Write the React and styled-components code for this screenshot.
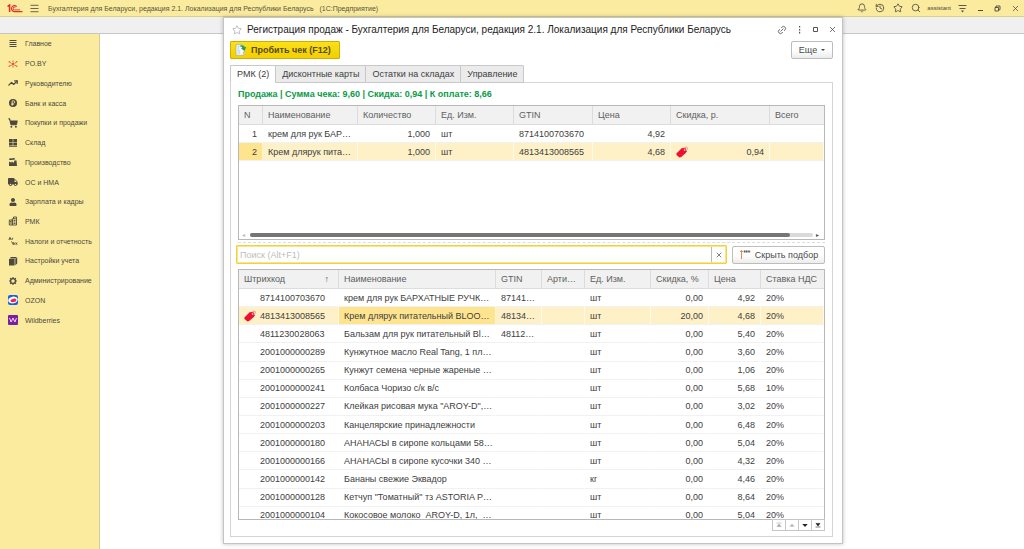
import React from 'react';
import styled, { createGlobalStyle } from 'styled-components';
import {
  Bell, History, Star, Search, Link2, Menu, TrendingUp, ShoppingCart, X,
} from 'lucide-react';
import { FaTruck, FaUser } from 'react-icons/fa';

const GlobalStyle = createGlobalStyle`
  * {
    box-sizing: border-box;
  }
  body {
    margin: 0;
    background: #fff;
    color: #404040;
    font-family: 'Liberation Sans', Arial, sans-serif;
    font-size: 9px;
  }
  button, input {
    font-family: inherit;
    font-size: inherit;
    color: inherit;
  }
`;

const SECTIONS = [
  { id: 'main', title: 'Главное' },
  { id: 'po', title: 'PO.BY' },
  { id: 'chief', title: 'Руководителю' },
  { id: 'bank', title: 'Банк и касса' },
  { id: 'sales', title: 'Покупки и продажи' },
  { id: 'stock', title: 'Склад' },
  { id: 'factory', title: 'Производство' },
  { id: 'assets', title: 'ОС и НМА' },
  { id: 'staff', title: 'Зарплата и кадры' },
  { id: 'rmk', title: 'РМК' },
  { id: 'taxes', title: 'Налоги и отчетность' },
  { id: 'settings', title: 'Настройки учета' },
  { id: 'admin', title: 'Администрирование' },
  { id: 'ozon', title: 'OZON' },
  { id: 'wb', title: 'Wildberries' },
];

const TABS = ['РМК (2)', 'Дисконтные карты', 'Остатки на складах', 'Управление'];

const CART = [
  { n: 1, name: 'крем для рук БАР…', qty: '1,000', unit: 'шт', gtin: '8714100703670', price: '4,92', discount: '' },
  { n: 2, name: 'Крем длярук пита…', qty: '1,000', unit: 'шт', gtin: '4813413008565', price: '4,68', discount: '0,94' },
];

const GOODS = [
  ['8714100703670', 'крем для рук БАРХАТНЫЕ РУЧК…', '87141…', 'шт', '0,00', '4,92', '20%'],
  ['4813413008565', 'Крем длярук питательный BLOO…', '48134…', 'шт', '20,00', '4,68', '20%'],
  ['4811230028063', 'Бальзам для рук питательный Bl…', '48112…', 'шт', '0,00', '5,40', '20%'],
  ['2001000000289', 'Кунжутное масло Real Tang, 1 пл…', '', 'шт', '0,00', '3,60', '20%'],
  ['2001000000265', 'Кунжут семена черные жареные …', '', 'шт', '0,00', '1,06', '20%'],
  ['2001000000241', 'Колбаса Чоризо с/к в/с', '', 'шт', '0,00', '5,68', '10%'],
  ['2001000000227', 'Клейкая рисовая мука "AROY-D",…', '', 'шт', '0,00', '3,02', '20%'],
  ['2001000000203', 'Канцелярские принадлежности', '', 'шт', '0,00', '6,48', '20%'],
  ['2001000000180', 'АНАНАСЫ в сиропе кольцами 58…', '', 'шт', '0,00', '5,04', '20%'],
  ['2001000000166', 'АНАНАСЫ в сиропе кусочки 340 …', '', 'шт', '0,00', '4,32', '20%'],
  ['2001000000142', 'Бананы свежие Эквадор', '', 'кг', '0,00', '4,46', '20%'],
  ['2001000000128', 'Кетчуп "Томатный" тз ASTORIA P…', '', 'шт', '0,00', '8,64', '20%'],
  ['2001000000104', 'Кокосовое молоко\u00a0 AROY-D, 1л,\u00a0 …', '', 'шт', '0,00', '5,04', '20%'],
];

function SectionIcon({ id }) {
  switch (id) {
    case 'main':
      return <svg width="10" height="10" viewBox="0 0 10 10"><path d="M1.5 1.5h7M1.5 3.5h7M1.5 5.5h7M1.5 7.5h7" stroke="#4d4840" /></svg>;
    case 'po':
      return (
        <svg width="10" height="10" viewBox="0 0 10 10">
          <path d="M5 3.5V1.5M5 6.5v2M3.5 4.5L1.5 3M6.5 4.5L8.5 3M3.8 6L1.5 7M6.2 6l2.3 1" stroke="#e2582f" strokeWidth="0.9" />
          <g fill="#e2582f"><circle cx="1.3" cy="2.8" r=".8" /><circle cx="8.7" cy="2.8" r=".8" /><circle cx="5" cy="5" r="1.2" /><circle cx="1.2" cy="7.3" r=".7" /><circle cx="8.8" cy="7.3" r=".7" /></g>
        </svg>
      );
    case 'chief':
      return <TrendingUp size={10} strokeWidth={3} />;
    case 'bank':
      return (
        <svg width="10" height="10" viewBox="0 0 10 10">
          <circle cx="5" cy="5" r="4" fill="#4d4840" />
          <path d="M4.2 7.8V2.8h1.3a1.2 1.2 0 0 1 0 2.5H3.3M3.3 6.5h2.4" fill="none" stroke="#fbeb9e" strokeWidth=".8" />
        </svg>
      );
    case 'sales':
      return <ShoppingCart size={10} strokeWidth={2.5} fill="currentColor" />;
    case 'stock':
      return (
        <svg width="10" height="10" viewBox="0 0 10 10" fill="#4d4840">
          <path d="M1 1h3.7v3H1zM5.3 1H9v3H5.3zM1 4.6h3.7v3H1zM5.3 4.6H9v3H5.3zM1 8.2h8V9H1z" />
        </svg>
      );
    case 'factory':
      return (
        <svg width="10" height="10" viewBox="0 0 10 10" fill="#4d4840">
          <path d="M1 9V4.6l2.4 1.2V4.4l2.5 1.4L6.3 3.4h2.2L9 9zM1 2.8C1.3 1.3 2.8 1 3.6 1.7 4.6.7 6.6.8 7.4 2.2 5.5 3 2.7 3.3 1 2.8z" />
        </svg>
      );
    case 'assets':
      return <FaTruck size={10} />;
    case 'staff':
      return <FaUser size={8} />;
    case 'rmk':
      return (
        <svg width="10" height="10" viewBox="0 0 10 10" fill="none" stroke="#4d4840" strokeWidth=".9">
          <path d="M1.3 4h3v5h-3zM4.3 2.8h4.2V9H4.3zM5.5 2.8V1h3v1.8M5.5 4.5h2M5.5 6h2M5.5 7.5h2M2 5.5h1.5M2 7h1.5" />
        </svg>
      );
    case 'taxes':
      return (
        <svg width="10" height="10" viewBox="0 0 10 10" fill="none" stroke="#4d4840" strokeWidth=".8">
          <path d="M.8 4L2 1.2 3.2 4M1.3 3h1.4M4.2 4V2.2M4.2 2.5l1-.4M3 5.5L6 8" />
          <circle cx="5.6" cy="7.6" r="1" /><path d="M7.6 6.5l1.6 2.3M9.2 6.5L7.6 8.8" />
        </svg>
      );
    case 'settings':
      return (
        <svg width="10" height="10" viewBox="0 0 10 10" fill="#4d4840">
          <path d="M1 3h5.6v6.5H1zM1.6 2.4L3 1h6L7.3 2.4zM7.3 3L9.2 1.4v6L7.3 9.2z" />
        </svg>
      );
    case 'admin':
      return (
        <svg width="10" height="10" viewBox="0 0 10 10" fill="none" stroke="#4d4840">
          <circle cx="5" cy="5" r="2.4" strokeWidth="1.3" />
          <path d="M5 1v1.4M5 7.6V9M1 5h1.4M7.6 5H9M2.1 2.1l1 1M6.9 6.9l1 1M7.9 2.1l-1 1M3.1 6.9l-1 1" strokeWidth="1.2" />
        </svg>
      );
    case 'ozon':
      return (
        <svg width="10" height="10" viewBox="0 0 10 10">
          <rect width="10" height="10" rx="2" fill="#1261ee" />
          <ellipse cx="5" cy="5" rx="4.8" ry="3.4" fill="#fff" transform="rotate(-12 5 5)" />
          <ellipse cx="5.4" cy="5.4" rx="3" ry="1.7" fill="#f4274f" transform="rotate(-12 5 5)" />
        </svg>
      );
    default:
      return (
        <svg width="10" height="10" viewBox="0 0 10 10">
          <rect width="10" height="10" rx="1" fill="#7c1fa0" />
          <path d="M1.5 3l1.6 4L5 3l1.9 4 1.6-4" fill="none" stroke="#f3d6f5" strokeWidth="1" />
        </svg>
      );
  }
}

const Logo = () => (
  <svg width="16" height="9" viewBox="0 0 16 9" fill="none" stroke="#e0302a">
    <path d="M.6 2.6L2.6 1v7" strokeWidth="1.5" />
    <path d="M9.7 2.6A3 3 0 1 0 7.3 7.6H15.5" strokeWidth="1.1" />
    <path d="M8.4 3.5A1.4 1.4 0 1 0 7.3 5.9H13" strokeWidth=".9" />
  </svg>
);

const DiscountTag = () => (
  <svg width="12" height="12" viewBox="0 0 12 12">
    <path d="M.4 7.4L5.6 2.3l3.6-.6 1.5 3.5-.9 1.7-4.6 4.2-1.7.3L.5 8.9z" fill="#ee1030" />
    <path d="M7.6 3.7l1.4-.6.4 1.3-1.2.4z" fill="#fff" />
    <path d="M8.5 3.6c0-2.4 2.2-3.2 2.7-1.9.4 1.4-.7 2.6-1.8 3" fill="none" stroke="#f0707c" strokeWidth=".8" />
  </svg>
);

const ReceiptIcon = () => (
  <svg width="12" height="12" viewBox="0 0 12 12">
    <path d="M1 .8h6.2L9 2.8v8.4H1z" fill="#fff" stroke="#9aa7a4" strokeWidth=".7" />
    <path d="M2.3 3h2M2.3 5h2M2.3 7h3M2.3 9h3" stroke="#7eb6dc" strokeWidth=".8" />
    <path d="M4.2 2.6C6 .5 8.8.8 9.7 3.2l1.6-.2-1.8 3.8-3.6-2.2 1.5-.6C6.7 2.6 5.4 2.3 4.2 2.6z" fill="#1c9d62" />
    <path d="M8.6 7.6l2.8 2.2-1.3 1.6-2.8-2.1z" fill="#efc46b" />
  </svg>
);

const PickIcon = () => (
  <svg width="12" height="11" viewBox="0 0 12 11">
    <path d="M2.5 10V1.5M1 3l1.5-1.7L4 3" fill="none" stroke="#e08a5c" strokeWidth="1" />
    <path d="M4.8 2.4h6.4" stroke="#555" strokeWidth="2" strokeDasharray="1.4 .4" />
  </svg>
);

export default function App() {
  return (
    <Page>
      <GlobalStyle />
      <TopBar>
        <Logo />
        <IconButton aria-label="Меню"><Menu size={11} strokeWidth={1.8} /></IconButton>
        <AppTitle>Бухгалтерия для Беларуси, редакция 2.1. Локализация для Республики Беларусь &nbsp; (1С:Предприятие)</AppTitle>
        <TopTools>
          <IconButton aria-label="Уведомления"><Bell size={10} /></IconButton>
          <IconButton aria-label="История"><History size={10} /></IconButton>
          <IconButton aria-label="Избранное"><Star size={10} /></IconButton>
          <IconButton aria-label="Поиск"><Search size={10} /></IconButton>
        </TopTools>
        <UserName href="#">assistant</UserName>
        <WindowTools>
          <IconButton aria-label="Настройка">
            <svg width="9" height="9" viewBox="0 0 9 9"><path d="M.5 1.5h8M1.5 4.5h6" stroke="#4d4840" strokeWidth=".9" /><path d="M3 6.5h3L4.5 8.5z" fill="#4d4840" /></svg>
          </IconButton>
          <IconButton aria-label="Свернуть">
            <svg width="7" height="9" viewBox="0 0 7 9"><path d="M1 6.5h5" stroke="#4d4840" /></svg>
          </IconButton>
          <IconButton aria-label="Восстановить">
            <svg width="7" height="9" viewBox="0 0 7 9" fill="none" stroke="#4d4840" strokeWidth=".9"><path d="M1 3.5h3.5V7H1zM2 3.5V2h4v3.8H4.5" /></svg>
          </IconButton>
          <IconButton aria-label="Закрыть"><X size={9} /></IconButton>
        </WindowTools>
      </TopBar>
      <OpenBar />
      <Workspace>
        <Sidebar>
          <SectionList>
            {SECTIONS.map(({ id, title }) => (
              <SectionLink key={id} href="#">
                <SectionMark><SectionIcon id={id} /></SectionMark>
                {title}
              </SectionLink>
            ))}
          </SectionList>
        </Sidebar>
      </Workspace>

      <Dialog>
        <DialogHeader>
          <Star size={10} color="#999" strokeWidth={1.5} />
          <DialogTitle>Регистрация продаж - Бухгалтерия для Беларуси, редакция 2.1. Локализация для Республики Беларусь</DialogTitle>
          <DialogTools>
            <IconButton aria-label="Ссылка"><LinkIcon size={10} strokeWidth={1.8} /></IconButton>
            <IconButton aria-label="Еще действия">
              <svg width="7" height="9" viewBox="0 0 7 9" fill="#555"><path d="M3 1h1.2v1.6H3zM3 3.9h1.2v1.6H3zM3 6.8h1.2v1.6H3z" /></svg>
            </IconButton>
            <IconButton aria-label="Развернуть">
              <svg width="7" height="9" viewBox="0 0 7 9"><path d="M1.5 2.5h4v4h-4z" fill="none" stroke="#555" /></svg>
            </IconButton>
            <IconButton aria-label="Закрыть окно"><X size={9} /></IconButton>
          </DialogTools>
        </DialogHeader>

        <Toolbar>
          <CheckButton><ReceiptIcon />Пробить чек (F12)</CheckButton>
          <PlainButton $small>Еще<Caret /></PlainButton>
        </Toolbar>

        <Tabs role="tablist">
          {TABS.map((tab, i) => (
            <Tab key={tab} role="tab" aria-selected={i === 0} $active={i === 0}>{tab}</Tab>
          ))}
        </Tabs>

        <TabPanel role="tabpanel">
          <Summary>Продажа | Сумма чека: 9,60 | Скидка: 0,94 | К оплате: 8,66</Summary>

          <CartFrame>
            <Grid>
              <colgroup>
                <Col $w={24} /><Col $w={95} /><Col $w={78} /><Col $w={78} /><Col $w={79} /><Col $w={78} /><Col $w={99} /><Col />
              </colgroup>
              <thead>
                <tr>
                  <Th>N</Th><Th>Наименование</Th><Th>Количество</Th><Th>Ед. Изм.</Th>
                  <Th>GTIN</Th><Th>Цена</Th><Th>Скидка, р.</Th><Th>Всего</Th>
                </tr>
              </thead>
              <tbody>
                {CART.map((row) => (
                  <Row key={row.n} $selected={row.n === 2}>
                    <Td $right $current={row.n === 2}>{row.n}</Td>
                    <Td>{row.name}</Td>
                    <Td $right>{row.qty}</Td>
                    <Td>{row.unit}</Td>
                    <Td>{row.gtin}</Td>
                    <Td $right>{row.price}</Td>
                    <Td $right>{row.discount && <DiscountCell><DiscountTag />{row.discount}</DiscountCell>}</Td>
                    <Td />
                  </Row>
                ))}
              </tbody>
            </Grid>
            <ScrollBar>
              <Arrow $dim>◂</Arrow>
              <Track><Thumb /></Track>
              <Arrow>▸</Arrow>
            </ScrollBar>
          </CartFrame>

          <Splitter />

          <SearchRow>
            <SearchBox>
              <input type="text" placeholder="Поиск (Alt+F1)" aria-label="Поиск" />
              <button aria-label="Очистить"><X size={8} /></button>
            </SearchBox>
            <PlainButton><PickIcon />Скрыть подбор</PlainButton>
          </SearchRow>

          <GoodsFrame>
            <Grid $tall>
              <colgroup>
                <Col $w={100} /><Col $w={157} /><Col $w={46} /><Col $w={43} /><Col $w={66} /><Col $w={58} /><Col $w={52} /><Col />
              </colgroup>
              <thead>
                <tr>
                  <Th><SortHead>Штрихкод<span>↑</span></SortHead></Th>
                  <Th>Наименование</Th><Th>GTIN</Th><Th>Арти…</Th><Th>Ед. Изм.</Th>
                  <Th>Скидка, %</Th><Th>Цена</Th><Th>Ставка НДС</Th>
                </tr>
              </thead>
              <tbody>
                {GOODS.map(([code, name, gtin, unit, discount, price, vat], i) => (
                  <Row key={code} $selected={i === 1}>
                    <Td><CodeCell><Mark>{i === 1 && <DiscountTag />}</Mark>{code}</CodeCell></Td>
                    <Td $current={i === 1}>{name}</Td>
                    <Td>{gtin}</Td>
                    <Td />
                    <Td>{unit}</Td>
                    <Td $right>{discount}</Td>
                    <Td $right>{price}</Td>
                    <Td>{vat}</Td>
                  </Row>
                ))}
              </tbody>
            </Grid>
          </GoodsFrame>

          <Pager>
            <PagerButton aria-label="В начало" disabled><svg width="6" height="6" viewBox="0 0 6 6"><path d="M.5 1h5M3 2l2 2.6H1z" fill="currentColor" stroke="currentColor" strokeWidth=".6" /></svg></PagerButton>
            <PagerButton aria-label="Вверх" disabled><svg width="6" height="6" viewBox="0 0 6 6"><path d="M3 2l2.5 2.6h-5z" fill="currentColor" /></svg></PagerButton>
            <PagerButton aria-label="Вниз"><svg width="6" height="6" viewBox="0 0 6 6"><path d="M3 5L.3 2h5.4z" fill="currentColor" /></svg></PagerButton>
            <PagerButton aria-label="В конец"><svg width="6" height="6" viewBox="0 0 6 6"><path d="M.5 5h5M3 4L1 1.4h4z" fill="currentColor" stroke="currentColor" strokeWidth=".6" /></svg></PagerButton>
          </Pager>
        </TabPanel>
      </Dialog>
    </Page>
  );
}

const Page = styled.div`
  position: relative;
  display: flex;
  flex-direction: column;
  min-height: 100vh;
`;

const TopBar = styled.header`
  display: flex;
  align-items: center;
  height: 17px;
  padding: 0 4px 0 7px;
  gap: 6px;
  background: #fbeb9e;
  border-bottom: 1px solid #d9cf95;
  color: #4d4840;
`;

const AppTitle = styled.div`
  flex: 1;
  margin-left: 2px;
  font-size: 7px;
  white-space: nowrap;
  color: #5a5340;
`;

const IconButton = styled.button`
  display: flex;
  align-items: center;
  justify-content: center;
  padding: 0;
  border: none;
  background: none;
  color: #4d4840;
`;

const TopTools = styled.div`
  display: flex;
  gap: 8px;
`;

const UserName = styled.a`
  font-size: 6px;
  color: #4d4840;
  text-decoration: none;
`;

const WindowTools = styled.div`
  display: flex;
  gap: 10px;
  margin-left: 1px;
`;

const OpenBar = styled.div`
  height: 17px;
  background: #f0f0f0;
  border-bottom: 1px solid #c6c6c6;
`;

const Workspace = styled.main`
  flex: 1;
  display: flex;
`;

const Sidebar = styled.nav`
  width: 100px;
  background: #fbeb9e;
  border-right: 1px solid #d6cc94;
`;

const SectionList = styled.div`
  display: flex;
  flex-direction: column;
  height: 296px;
`;

const SectionLink = styled.a`
  flex: 1;
  display: flex;
  align-items: center;
  padding-left: 8px;
  gap: 7px;
  font-size: 7px;
  white-space: nowrap;
  text-decoration: none;
  color: #4d4840;
`;

const SectionMark = styled.span`
  display: flex;
  justify-content: center;
  width: 10px;
`;

const LinkIcon = styled(Link2)`
  transform: rotate(-45deg);
`;

const Dialog = styled.section`
  position: absolute;
  top: 17px;
  right: 181px;
  bottom: 5px;
  left: 223px;
  display: flex;
  flex-direction: column;
  padding: 0 9px 6px 6px;
  background: #fff;
  border: 1px solid #c4c4c4;
  box-shadow: 0 0 4px rgba(0, 0, 0, 0.25);
`;

const DialogHeader = styled.header`
  display: flex;
  align-items: center;
  height: 23px;
  padding-left: 2px;
`;

const DialogTitle = styled.h1`
  flex: 1;
  margin: 0 0 0 5px;
  font-size: 10px;
  font-weight: normal;
  white-space: nowrap;
  color: #222;
`;

const DialogTools = styled.div`
  display: flex;
  align-items: center;
  gap: 9px;
  margin-right: -4px;
`;

const Toolbar = styled.div`
  display: flex;
  justify-content: space-between;
  margin-bottom: 6px;
`;

const CheckButton = styled.button`
  display: flex;
  align-items: center;
  gap: 4px;
  height: 18px;
  padding: 0 8px 0 4px;
  border: 1px solid #d0ab00;
  border-radius: 1px;
  background: linear-gradient(#fbe01a, #f2cf00);
  font-weight: bold;
  color: #574b12;
`;

const PlainButton = styled.button`
  display: flex;
  align-items: center;
  justify-content: center;
  gap: 4px;
  width: ${({ $small }) => ($small ? '42px' : '93px')};
  height: 18px;
  padding: 0;
  border: 1px solid #bdbdbd;
  border-radius: 2px;
  background: linear-gradient(#fff 50%, #ececec);
  color: #4a4a4a;
`;

const Caret = styled.span`
  border: 2px solid transparent;
  border-top-color: #444;
  border-bottom: none;
`;

const Tabs = styled.div`
  display: flex;
  position: relative;
  z-index: 1;
  margin-bottom: -1px;
`;

const Tab = styled.button`
  height: 18px;
  padding: 0 6px;
  margin-right: -1px;
  border: 1px solid #c8c8c8;
  border-bottom-color: ${({ $active }) => ($active ? '#fff' : '#c8c8c8')};
  border-radius: 1px 1px 0 0;
  background: ${({ $active }) => ($active ? '#fff' : '#ebebeb')};
  white-space: nowrap;
`;

const TabPanel = styled.div`
  flex: 1;
  min-height: 0;
  display: flex;
  flex-direction: column;
  padding: 0 7px 5px;
  border: 1px solid #d4d4d4;
`;

const Summary = styled.div`
  line-height: 22px;
  font-weight: bold;
  color: #0a9a48;
`;

const CartFrame = styled.div`
  display: flex;
  flex-direction: column;
  justify-content: space-between;
  height: 135px;
  border: 1px solid #b8b8b8;
`;

const GoodsFrame = styled.div`
  flex: 1;
  min-height: 0;
  overflow: hidden;
  border: 1px solid #b8b8b8;
`;

const Grid = styled.table`
  width: 100%;
  height: ${({ $tall }) => ($tall ? '255px' : 'auto')};
  table-layout: fixed;
  border-collapse: separate;
  border-spacing: 0;
`;

const Col = styled.col`
  width: ${({ $w }) => ($w ? `${$w}px` : 'auto')};
`;

const Th = styled.th`
  height: 19px;
  padding: 0 2px 0 5px;
  text-align: left;
  white-space: nowrap;
  font-weight: normal;
  color: #606060;
  background: #f1f1f1;
  border-right: 1px solid #dcdcdc;
  border-bottom: 1px solid #dcdcdc;
  &:last-child {
    border-right: none;
  }
`;

const Row = styled.tr`
  background: ${({ $selected }) => ($selected ? '#fef1c8' : '#fff')};
`;

const Td = styled.td`
  height: 18px;
  padding: ${({ $right }) => ($right ? '0 5px' : '0 2px 0 5px')};
  text-align: ${({ $right }) => ($right ? 'right' : 'left')};
  white-space: nowrap;
  background: ${({ $current }) => ($current ? '#ffe48f' : 'transparent')};
  border-right: 1px solid rgba(255, 255, 255, 0.6);
  border-bottom: 1px solid #f1f1f1;
`;

const DiscountCell = styled.div`
  display: flex;
  align-items: center;
  justify-content: space-between;
`;

const CodeCell = styled.div`
  display: flex;
  align-items: center;
  gap: 4px;
`;

const Mark = styled.span`
  display: flex;
  width: 12px;
`;

const SortHead = styled.div`
  display: flex;
  justify-content: space-between;
  padding-right: 7px;
`;

const ScrollBar = styled.div`
  display: flex;
  align-items: center;
  gap: 3px;
  height: 8px;
  padding: 0 3px;
`;

const Arrow = styled.span`
  width: 5px;
  font-size: 6px;
  line-height: 6px;
  color: ${({ $dim }) => ($dim ? '#bbb' : '#555')};
`;

const Track = styled.div`
  flex: 1;
  height: 4px;
  border-radius: 2px;
  background: #dadada;
`;

const Thumb = styled.div`
  width: 96%;
  height: 4px;
  border-radius: 2px;
  background: #757575;
`;

const Splitter = styled.div`
  height: 3px;
  margin-bottom: 2px;
  border-bottom: 1px dashed #ddd;
`;

const SearchRow = styled.div`
  display: flex;
  align-items: center;
  gap: 5px;
  margin: 0 0 5px -2px;
`;

const SearchBox = styled.div`
  flex: 1;
  display: flex;
  height: 19px;
  border: 1px solid #f5cf3d;
  box-shadow: inset 0 0 0 1px #fbe48c;
  border-radius: 1px;
  input {
    flex: 1;
    min-width: 0;
    padding: 0 3px;
    border: none;
    outline: none;
    background: transparent;
  }
  input::placeholder {
    color: #bdbdbd;
  }
  button {
    display: flex;
    align-items: center;
    justify-content: center;
    width: 15px;
    margin: 1px 0;
    padding: 0;
    border: none;
    border-left: 1px solid #bbb;
    background: none;
  }
`;

const Pager = styled.div`
  display: flex;
  justify-content: flex-end;
`;

const PagerButton = styled.button`
  display: flex;
  align-items: center;
  justify-content: center;
  width: 14px;
  height: 12px;
  margin: -1px 0 0 -1px;
  padding: 0;
  border: 1px solid #c6c6c6;
  background: #fff;
  color: #222;
  &:disabled {
    color: #aaa;
  }
`;
